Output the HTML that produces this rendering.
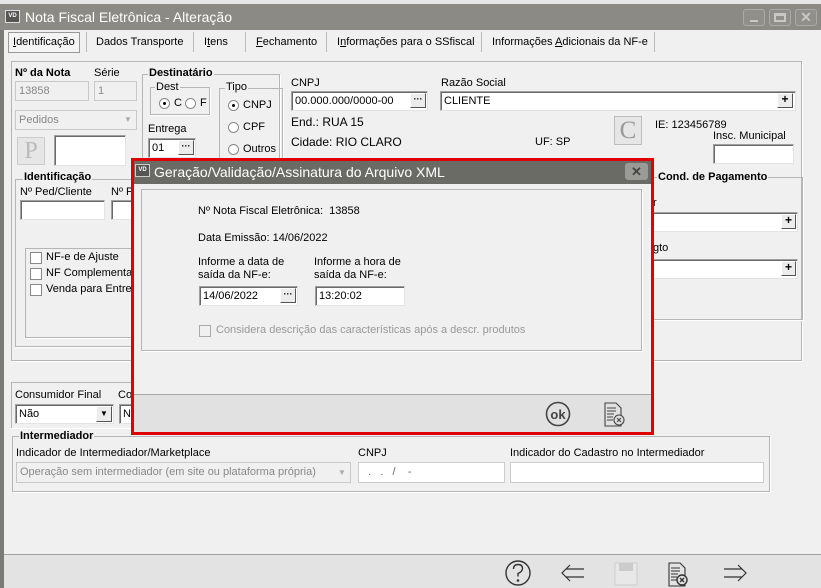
<!DOCTYPE html>
<html><head><meta charset="utf-8"><style>
*{box-sizing:border-box;margin:0;padding:0}
body{width:821px;height:588px;overflow:hidden;background:#f0f0f0;font-family:"Liberation Sans",sans-serif;font-size:11px;color:#000;position:relative}
.a{position:absolute}
.t{position:absolute;white-space:nowrap;font-size:11px}
.b{font-weight:bold}
.inp{position:absolute;background:#fff;border:1px solid #a0a0a0;border-right-color:#e3e3e3;border-bottom-color:#e3e3e3;box-shadow:inset 1px 1px 0 #696969;font-size:11px;padding:3px 3px;white-space:nowrap;overflow:hidden}
.dis{background:#f0f0f0;color:#888;box-shadow:none;border:1px solid #c8c8c8}
.grp{position:absolute;border:1px solid #b5b5b5;box-shadow:1px 1px 0 #fff}
.lg{position:absolute;background:#f0f0f0;padding:0 1px;white-space:nowrap}
.btn{position:absolute;background:#ececec;border:1px solid #fff;border-right-color:#555;border-bottom-color:#555;font-size:9px;text-align:center;line-height:11px;font-weight:bold}
.rad{position:absolute;width:11px;height:11px;border-radius:50%;border:1px solid #888;background:#fff}
.chk{position:absolute;width:12px;height:12px;border:1px solid #888;background:#fff}
</style></head><body>
<div class="a" style="left:0;top:0;width:821px;height:4px;background:#e6e6e6"></div>
<div class="a" style="left:0;top:4px;width:4px;height:584px;background:#7a7a76"></div>
<div class="a" style="left:0;top:4px;width:821px;height:26px;background:#8b8a84"></div>
<div class="a" style="left:5px;top:10px;width:15px;height:13px;background:#555;border:1px solid #ddd;color:#fff;font-size:6px;line-height:11px;text-align:center;font-weight:bold">VD</div>
<div class="t" style="left:25px;top:9px;font-size:14px;color:#fff">Nota Fiscal Eletrônica - Alteração</div>
<div class="a" style="left:743px;top:9px;width:22px;height:17px;border:1px solid #aaa;border-radius:3px;background:#908f89"><div class="a" style="left:6px;top:10px;width:8px;height:2px;background:#c8c8c4"></div></div>
<div class="a" style="left:769px;top:9px;width:22px;height:17px;border:1px solid #aaa;border-radius:3px;background:#908f89"><div class="a" style="left:4px;top:3px;width:12px;height:9px;border:2px solid #c8c8c4;border-top-width:3px"></div></div>
<div class="a" style="left:795px;top:9px;width:22px;height:17px;border:1px solid #aaa;border-radius:3px;background:#908f89;color:#c8c8c4;font-size:14px;font-weight:bold;text-align:center;line-height:15px">✕</div>
<!-- tabs -->
<div class="a" style="left:8px;top:32px;width:72px;height:21px;border:1px solid #999;background:#f4f4f4"></div>
<div class="t" style="left:13px;top:36px"><u>I</u>dentificação</div>
<div class="t" style="left:96px;top:36px">Dados Transporte</div>
<div class="t" style="left:204px;top:36px">I<u>t</u>ens</div>
<div class="t" style="left:256px;top:36px"><u>F</u>echamento</div>
<div class="t" style="left:337px;top:36px">I<u>n</u>formações para o SSfiscal</div>
<div class="t" style="left:492px;top:36px">Informações <u>A</u>dicionais da NF-e</div>
<div class="a" style="left:86px;top:32px;width:1px;height:20px;background:#bbb"></div>
<div class="a" style="left:193px;top:32px;width:1px;height:20px;background:#bbb"></div>
<div class="a" style="left:245px;top:32px;width:1px;height:20px;background:#bbb"></div>
<div class="a" style="left:326px;top:32px;width:1px;height:20px;background:#bbb"></div>
<div class="a" style="left:481px;top:32px;width:1px;height:20px;background:#bbb"></div>
<div class="a" style="left:654px;top:32px;width:1px;height:20px;background:#bbb"></div>
<!-- tab page -->
<div class="grp" style="left:11px;top:61px;width:791px;height:300px"></div>
<div class="t b" style="left:15px;top:67px">Nº da Nota</div>
<div class="t" style="left:94px;top:67px">Série</div>
<div class="inp dis" style="left:15px;top:81px;width:74px;height:20px;color:#888">13858</div>
<div class="inp dis" style="left:94px;top:81px;width:43px;height:20px">1</div>
<div class="inp dis" style="left:15px;top:110px;width:122px;height:20px">Pedidos</div>
<div class="a" style="left:121px;top:113px;width:14px;height:14px;font-size:8px;color:#aaa;text-align:center;line-height:14px">▼</div>
<div class="a" style="left:17px;top:137px;width:28px;height:28px;background:#e6e6e6;border:1px solid #ccc;color:#bbb;font-family:'Liberation Serif',serif;font-size:24px;text-align:center;line-height:26px">P</div>
<div class="inp" style="left:54px;top:135px;width:72px;height:31px"></div>
<div class="grp" style="left:142px;top:74px;width:138px;height:90px"></div>
<div class="lg b" style="left:148px;top:67px">Destinatário</div>
<div class="grp" style="left:150px;top:87px;width:60px;height:28px"></div>
<div class="lg" style="left:155px;top:81px">Dest</div>
<div class="rad" style="left:159px;top:98px"><div class="a" style="left:3px;top:3px;width:3px;height:3px;background:#000;border-radius:50%"></div></div>
<div class="t" style="left:174px;top:97px">C</div>
<div class="rad" style="left:185px;top:98px"></div>
<div class="t" style="left:200px;top:97px">F</div>
<div class="t" style="left:148px;top:123px">Entrega</div>
<div class="inp" style="left:148px;top:138px;width:48px;height:20px">01</div>
<div class="btn" style="left:178px;top:140px;width:16px;height:15px">···</div>
<div class="grp" style="left:219px;top:88px;width:64px;height:80px"></div>
<div class="lg" style="left:225px;top:81px">Tipo</div>
<div class="rad" style="left:228px;top:100px"><div class="a" style="left:3px;top:3px;width:3px;height:3px;background:#000;border-radius:50%"></div></div>
<div class="t" style="left:243px;top:99px">CNPJ</div>
<div class="rad" style="left:228px;top:122px"></div>
<div class="t" style="left:243px;top:121px">CPF</div>
<div class="rad" style="left:228px;top:144px"></div>
<div class="t" style="left:243px;top:143px">Outros</div>
<div class="t" style="left:291px;top:77px">CNPJ</div>
<div class="inp" style="left:291px;top:91px;width:137px;height:20px">00.000.000/0000-00</div>
<div class="btn" style="left:410px;top:93px;width:16px;height:15px">···</div>
<div class="t" style="left:291px;top:115px;font-size:12px">End.: RUA 15</div>
<div class="t" style="left:291px;top:135px;font-size:12px">Cidade: RIO CLARO</div>
<div class="t" style="left:535px;top:136px">UF: SP</div>
<div class="t" style="left:441px;top:77px">Razão Social</div>
<div class="inp" style="left:440px;top:91px;width:356px;height:20px">CLIENTE</div>
<div class="btn" style="left:777px;top:93px;width:16px;height:15px;font-size:12px">+</div>
<div class="a" style="left:614px;top:116px;width:28px;height:29px;background:#e6e6e6;border:1px solid #bbb;color:#999;font-family:'Liberation Serif',serif;font-size:25px;text-align:center;line-height:27px">C</div>
<div class="t" style="left:655px;top:119px">IE: 123456789</div>
<div class="t" style="left:713px;top:130px">Insc. Municipal</div>
<div class="inp" style="left:713px;top:144px;width:81px;height:20px"></div>
<div class="grp" style="left:15px;top:179px;width:120px;height:168px"></div>
<div class="lg b" style="left:23px;top:171px">Identificação</div>
<div class="t" style="left:20px;top:186px">Nº Ped/Cliente</div>
<div class="t" style="left:111px;top:186px">Nº P</div>
<div class="inp" style="left:20px;top:200px;width:85px;height:20px"></div>
<div class="inp" style="left:111px;top:200px;width:30px;height:20px"></div>
<div class="grp" style="left:25px;top:248px;width:120px;height:90px"></div>
<div class="chk" style="left:30px;top:252px"></div><div class="t" style="left:46px;top:251px">NF-e de Ajuste</div>
<div class="chk" style="left:30px;top:268px"></div><div class="t" style="left:46px;top:267px">NF Complementar</div>
<div class="chk" style="left:30px;top:284px"></div><div class="t" style="left:46px;top:283px">Venda para Entre</div>
<div class="grp" style="left:650px;top:177px;width:153px;height:143px"></div>
<div class="lg b" style="left:657px;top:171px">Cond. de Pagamento</div>
<div class="t" style="left:653px;top:197px">r</div>
<div class="inp" style="left:650px;top:212px;width:148px;height:20px"></div>
<div class="btn" style="left:781px;top:214px;width:15px;height:15px;font-size:12px">+</div>
<div class="t" style="left:653px;top:242px">gto</div>
<div class="inp" style="left:650px;top:259px;width:148px;height:20px"></div>
<div class="btn" style="left:781px;top:261px;width:15px;height:15px;font-size:12px">+</div>
<!-- consumidor -->
<div class="grp" style="left:11px;top:382px;width:130px;height:46px;border-bottom:none"></div>
<div class="t" style="left:15px;top:389px">Consumidor Final</div>
<div class="t" style="left:118px;top:389px">Co</div>
<div class="inp" style="left:15px;top:404px;width:99px;height:20px">Não</div>
<div class="btn" style="left:96px;top:406px;width:16px;height:16px;font-size:8px;line-height:14px">▼</div>
<div class="inp" style="left:119px;top:404px;width:20px;height:20px">N</div>
<div class="grp" style="left:12px;top:436px;width:758px;height:56px"></div>
<div class="lg b" style="left:19px;top:430px">Intermediador</div>
<div class="t" style="left:16px;top:447px">Indicador de Intermediador/Marketplace</div>
<div class="t" style="left:358px;top:447px">CNPJ</div>
<div class="t" style="left:510px;top:447px">Indicador do Cadastro no Intermediador</div>
<div class="inp dis" style="left:16px;top:462px;width:335px;height:21px;padding-top:3px">Operação sem intermediador (em site ou plataforma própria)</div>
<div class="a" style="left:335px;top:465px;width:14px;height:15px;font-size:8px;color:#aaa;text-align:center;line-height:15px">▼</div>
<div class="inp" style="left:358px;top:462px;width:147px;height:21px;box-shadow:none;border-color:#ccc;color:#666">&nbsp; .&nbsp;&nbsp; .&nbsp;&nbsp; /&nbsp;&nbsp;&nbsp; -</div>
<div class="inp" style="left:510px;top:462px;width:254px;height:21px;box-shadow:none;border-color:#ccc"></div>
<!-- bottom bar -->
<div class="a" style="left:4px;top:554px;width:817px;height:34px;background:#e3e3e3;border-top:1px solid #a0a0a0"></div>
<svg class="a" style="left:500px;top:558px" width="320" height="30" viewBox="0 0 320 30">
<g fill="none" stroke="#333" stroke-width="1.4">
<circle cx="18" cy="15" r="12"/>
<path d="M13.5 11 q0-4.5 4.5-4.5 q4.5 0 4.5 4 q0 3-4.5 5 v3"/>
<circle cx="18" cy="22.5" r="0.6" fill="#333"/>
<path d="M70 7 L62 15 L70 23 M66 11 H84 M66 19 H84" stroke-width="1.2"/>
<path d="M169 5h11l5 5v18h-16z M171 10h9M171 13h9M171 16h7M171 19h6M171 22h6" stroke-width="1.1"/>
<circle cx="182" cy="22" r="5" fill="#e3e3e3"/>
<path d="M180 20l4 4M184 20l-4 4"/>
<path d="M238 7 L246 15 L238 23 M242 11 H224 M242 19 H224" stroke-width="1.2"/>
</g>
<rect x="115" y="5" width="22" height="22" fill="#e8e8e8" stroke="#ccc"/><rect x="119" y="5" width="14" height="8" fill="#ccc"/>
</svg>
<!-- dialog -->
<div class="a" style="left:131px;top:158px;width:523px;height:277px;border:3px solid #e00000;background:#f0f0f0"></div>
<div class="a" style="left:134px;top:161px;width:517px;height:23px;background:#6b6b66"></div>
<div class="a" style="left:135px;top:164px;width:15px;height:13px;background:#555;border:1px solid #ccc;color:#fff;font-size:6px;line-height:11px;text-align:center;font-weight:bold">VD</div>
<div class="t" style="left:154px;top:164px;font-size:14px;color:#fff">Geração/Validação/Assinatura do Arquivo XML</div>
<div class="a" style="left:625px;top:163px;width:23px;height:17px;background:#9a9a96;border-radius:3px;color:#444;font-size:13px;font-weight:bold;text-align:center;line-height:17px">✕</div>
<div class="grp" style="left:141px;top:189px;width:501px;height:162px"></div>
<div class="t" style="left:198px;top:205px">Nº Nota Fiscal Eletrônica:&nbsp; 13858</div>
<div class="t" style="left:198px;top:232px">Data Emissão: 14/06/2022</div>
<div class="t" style="left:198px;top:256px;line-height:13px">Informe a data de<br>saída da NF-e:</div>
<div class="t" style="left:314px;top:256px;line-height:13px">Informe a hora de<br>saída da NF-e:</div>
<div class="inp" style="left:199px;top:286px;width:99px;height:20px">14/06/2022</div>
<div class="btn" style="left:280px;top:288px;width:16px;height:15px">···</div>
<div class="inp" style="left:315px;top:286px;width:90px;height:20px">13:20:02</div>
<div class="chk" style="left:199px;top:325px;background:#f0f0f0;border-color:#aaa"></div>
<div class="t" style="left:216px;top:324px;color:#999">Considera descrição das características após a descr. produtos</div>
<div class="a" style="left:134px;top:394px;width:517px;height:38px;background:#e1e1e1;border-top:1px solid #a8a8a8"></div>
<svg class="a" style="left:540px;top:398px" width="100" height="32" viewBox="0 0 100 32">
<circle cx="18" cy="16" r="11.5" fill="none" stroke="#444" stroke-width="1.6"/>
<text x="18" y="21" font-family="Liberation Sans" font-weight="bold" font-size="13" text-anchor="middle" fill="#444">ok</text>
<g fill="none" stroke="#444" stroke-width="1.1"><path d="M65 5h11l5 5v18h-16z M67 10h9M67 13h9M67 16h7M67 19h6M67 22h6"/>
<circle cx="79" cy="22" r="5" fill="#e1e1e1"/><path d="M77 20l4 4M81 20l-4 4"/></g>
</svg>
</body></html>
